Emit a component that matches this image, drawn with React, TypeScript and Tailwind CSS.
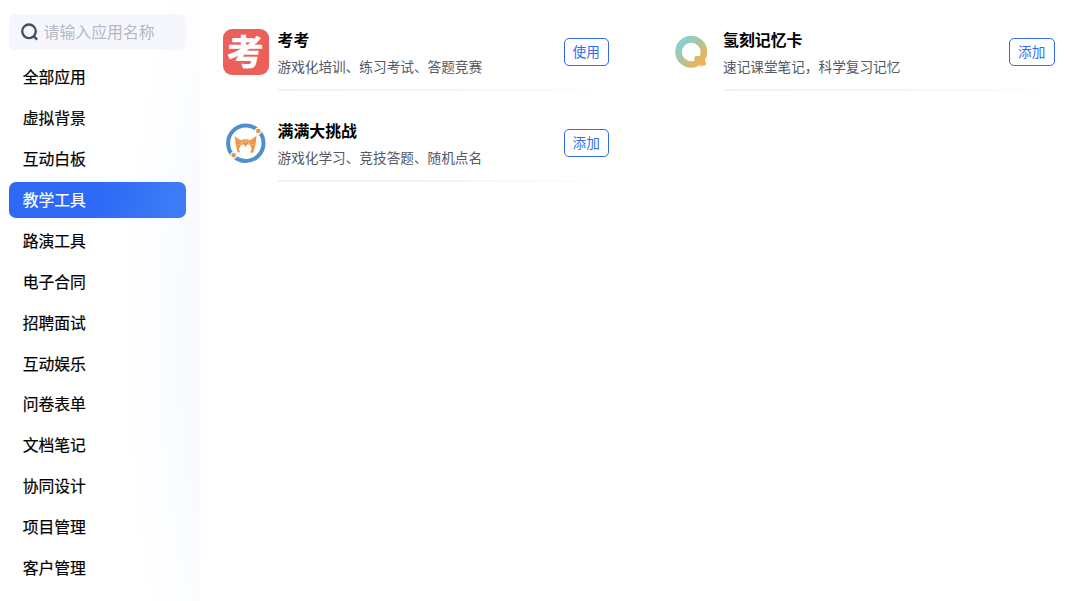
import { useState, type ReactNode } from 'react';

type AppItem = {
  id: string;
  name: string;
  desc: string;
  added: boolean;
  icon: ReactNode;
};

const categories = [
  '全部应用',
  '虚拟背景',
  '互动白板',
  '教学工具',
  '路演工具',
  '电子合同',
  '招聘面试',
  '互动娱乐',
  '问卷表单',
  '文档笔记',
  '协同设计',
  '项目管理',
  '客户管理',
];

const KaokaoIcon = () => (
  <div className="flex size-[46px] justify-center rounded-[9px] bg-[#ec605c]">
    <span className="mt-[3px] scale-x-105 text-[35px] leading-[36px] font-bold text-white [-webkit-text-stroke:0.6px_white]">考</span>
  </div>
);

const MemoryCardIcon = () => (
  <svg viewBox="0 0 46 46" className="size-[46px]">
    <defs>
      <linearGradient id="memory" x1="10" y1="10" x2="37" y2="37" gradientUnits="userSpaceOnUse">
        <stop offset="0" stopColor="#7ed3de" />
        <stop offset="0.45" stopColor="#adc59c" />
        <stop offset="0.8" stopColor="#e8b45d" />
        <stop offset="1" stopColor="#fbaf45" />
      </linearGradient>
    </defs>
    <g fill="url(#memory)">
      <path
        fillRule="evenodd"
        d="M23.200 6.800a16 16 0 1 1 0 32 16 16 0 0 1 0-32Zm0 6.900a9.300 9.300 0 1 0 0 18.600c1.200 0 2.200-.2 3.200-.6V29c0-1.300.9-2.100 2.200-2.100h3.200c.5-1.200.8-2.500.8-3.900a9.300 9.300 0 0 0-9.400-9.300Z"
      />
      <path d="M37 29.500c-.5 1.500-.2 2.400.5 3.400 1.300 1.800 0 4-2.200 3.900-1.200-.1-2.300.1-3.800.7Z" />
    </g>
  </svg>
);

const ChallengeIcon = () => (
  <svg viewBox="0 0 46 46" className="size-[46px]" fill="none">
    <circle cx="22.800" cy="23.200" r="17.700" stroke="#4f8fcd" strokeWidth="4" />
    <circle cx="35.300" cy="11" r="3.400" fill="#fff" />
    <circle cx="10.700" cy="35.300" r="3.400" fill="#fff" />
    <circle cx="35.300" cy="11" r="2.300" fill="#ef9340" />
    <circle cx="10.700" cy="35.300" r="2.300" fill="#ef9340" />
    <path
      fill="#ee9445"
      d="M11.600 16.200 18.300 20.400 20.300 18.900 22.500 19.400 24.700 18.900 26.700 20.200 33.600 15.800 32.400 25 30.300 32.700 27 32.500 28.700 29 27.300 24.900 24.300 24.200 22.500 27 20.600 24.300 17.900 25.200 16 28.800 17 32.700 14.300 31.500 13 25Z"
    />
    <path
      stroke="#fbd5ad"
      strokeWidth="0.500"
      d="m12.800 17.300 6.300 6.500.7-4.600M32.700 16.700l-7 7.100-.9-4.600M13.700 25l5.400-1.200M31.800 25l-6.100-1.200M20.500 19.500l2 3.500 2-3.500"
    />
  </svg>
);

const apps: AppItem[] = [
  { id: 'kaokao', name: '考考', desc: '游戏化培训、练习考试、答题竞赛', added: true, icon: <KaokaoIcon /> },
  { id: 'memory', name: '氢刻记忆卡', desc: '速记课堂笔记，科学复习记忆', added: false, icon: <MemoryCardIcon /> },
  { id: 'challenge', name: '满满大挑战', desc: '游戏化学习、竞技答题、随机点名', added: false, icon: <ChallengeIcon /> },
];

function AppCard({ app }: { app: AppItem }) {
  return (
    <div className="flex h-[91px] gap-[9px]">
      <div className="mt-[29px] shrink-0">{app.icon}</div>
      <div className="flex min-w-0 flex-1 flex-col">
        <div className="flex flex-1 justify-between pt-[28px] pr-[13.500px]">
          <div>
            <h3 className="text-[15.9px] leading-6 font-bold text-black">{app.name}</h3>
            <p className="mt-[2px] text-[13.65px] leading-6 text-[#535866]">{app.desc}</p>
          </div>
          <button className="mt-[10px] h-[28px] w-[45.500px] rounded-[5px] border border-[#2f6cf6] text-[13.65px] leading-none text-[#2f6cf6]">
            {app.added ? '使用' : '添加'}
          </button>
        </div>
        <div className="h-[2px] bg-linear-to-r from-[#f2f2f4] via-[#f5f5f6] to-[#f2f2f4]/0" />
      </div>
    </div>
  );
}

export default function App() {
  const [active, setActive] = useState('教学工具');
  const [keyword, setKeyword] = useState('');

  const visible = apps.filter((app) => app.name.includes(keyword));

  return (
    <div className="flex h-[601px] overflow-hidden bg-white font-['Noto_Sans_CJK_SC',sans-serif]">
      <aside className="w-[200px] shrink-0 bg-[radial-gradient(ellipse_140px_480px_at_260px_340px,#f3f6fd_0%,#f7f9fd_45%,#fcfdff_75%,#ffffff_100%)] pt-[14px] pr-[14px] pl-[9px]">
        <label className="flex h-9 items-center gap-[4.500px] rounded-[7px] bg-[#f6f7fc] pl-[12px]">
          <svg viewBox="0 0 18 18" className="size-[18px] shrink-0" fill="none" stroke="#474c5c" strokeWidth="2.300">
            <circle cx="8" cy="8.300" r="6.800" />
            <path d="m12.700 13.100 3.500 3.500" />
          </svg>
          <input
            value={keyword}
            onChange={(e) => setKeyword(e.target.value)}
            placeholder="请输入应用名称"
            className="w-full min-w-0 bg-transparent text-[15.9px] text-black outline-none placeholder:text-[#b5b9c6]"
          />
        </label>
        <nav className="mt-[9px] flex flex-col gap-[4.500px]">
          {categories.map((name) => (
            <button
              key={name}
              onClick={() => setActive(name)}
              className={`flex h-[36.400px] shrink-0 items-center rounded-[7px] pl-[13.700px] text-[15.8px] [-webkit-text-stroke:0.2px] ${
                active === name
                  ? 'bg-linear-[100deg,#2d69f6_0%,#2d69f6_50%,#3c7af7_90%] text-white'
                  : 'text-black'
              }`}
            >
              {name}
            </button>
          ))}
        </nav>
      </aside>

      <main className="grid flex-1 grid-cols-[400px_400px] content-start gap-x-[45.500px] pl-[22.500px]">
        {visible.map((app) => (
          <AppCard key={app.id} app={app} />
        ))}
      </main>
    </div>
  );
}
